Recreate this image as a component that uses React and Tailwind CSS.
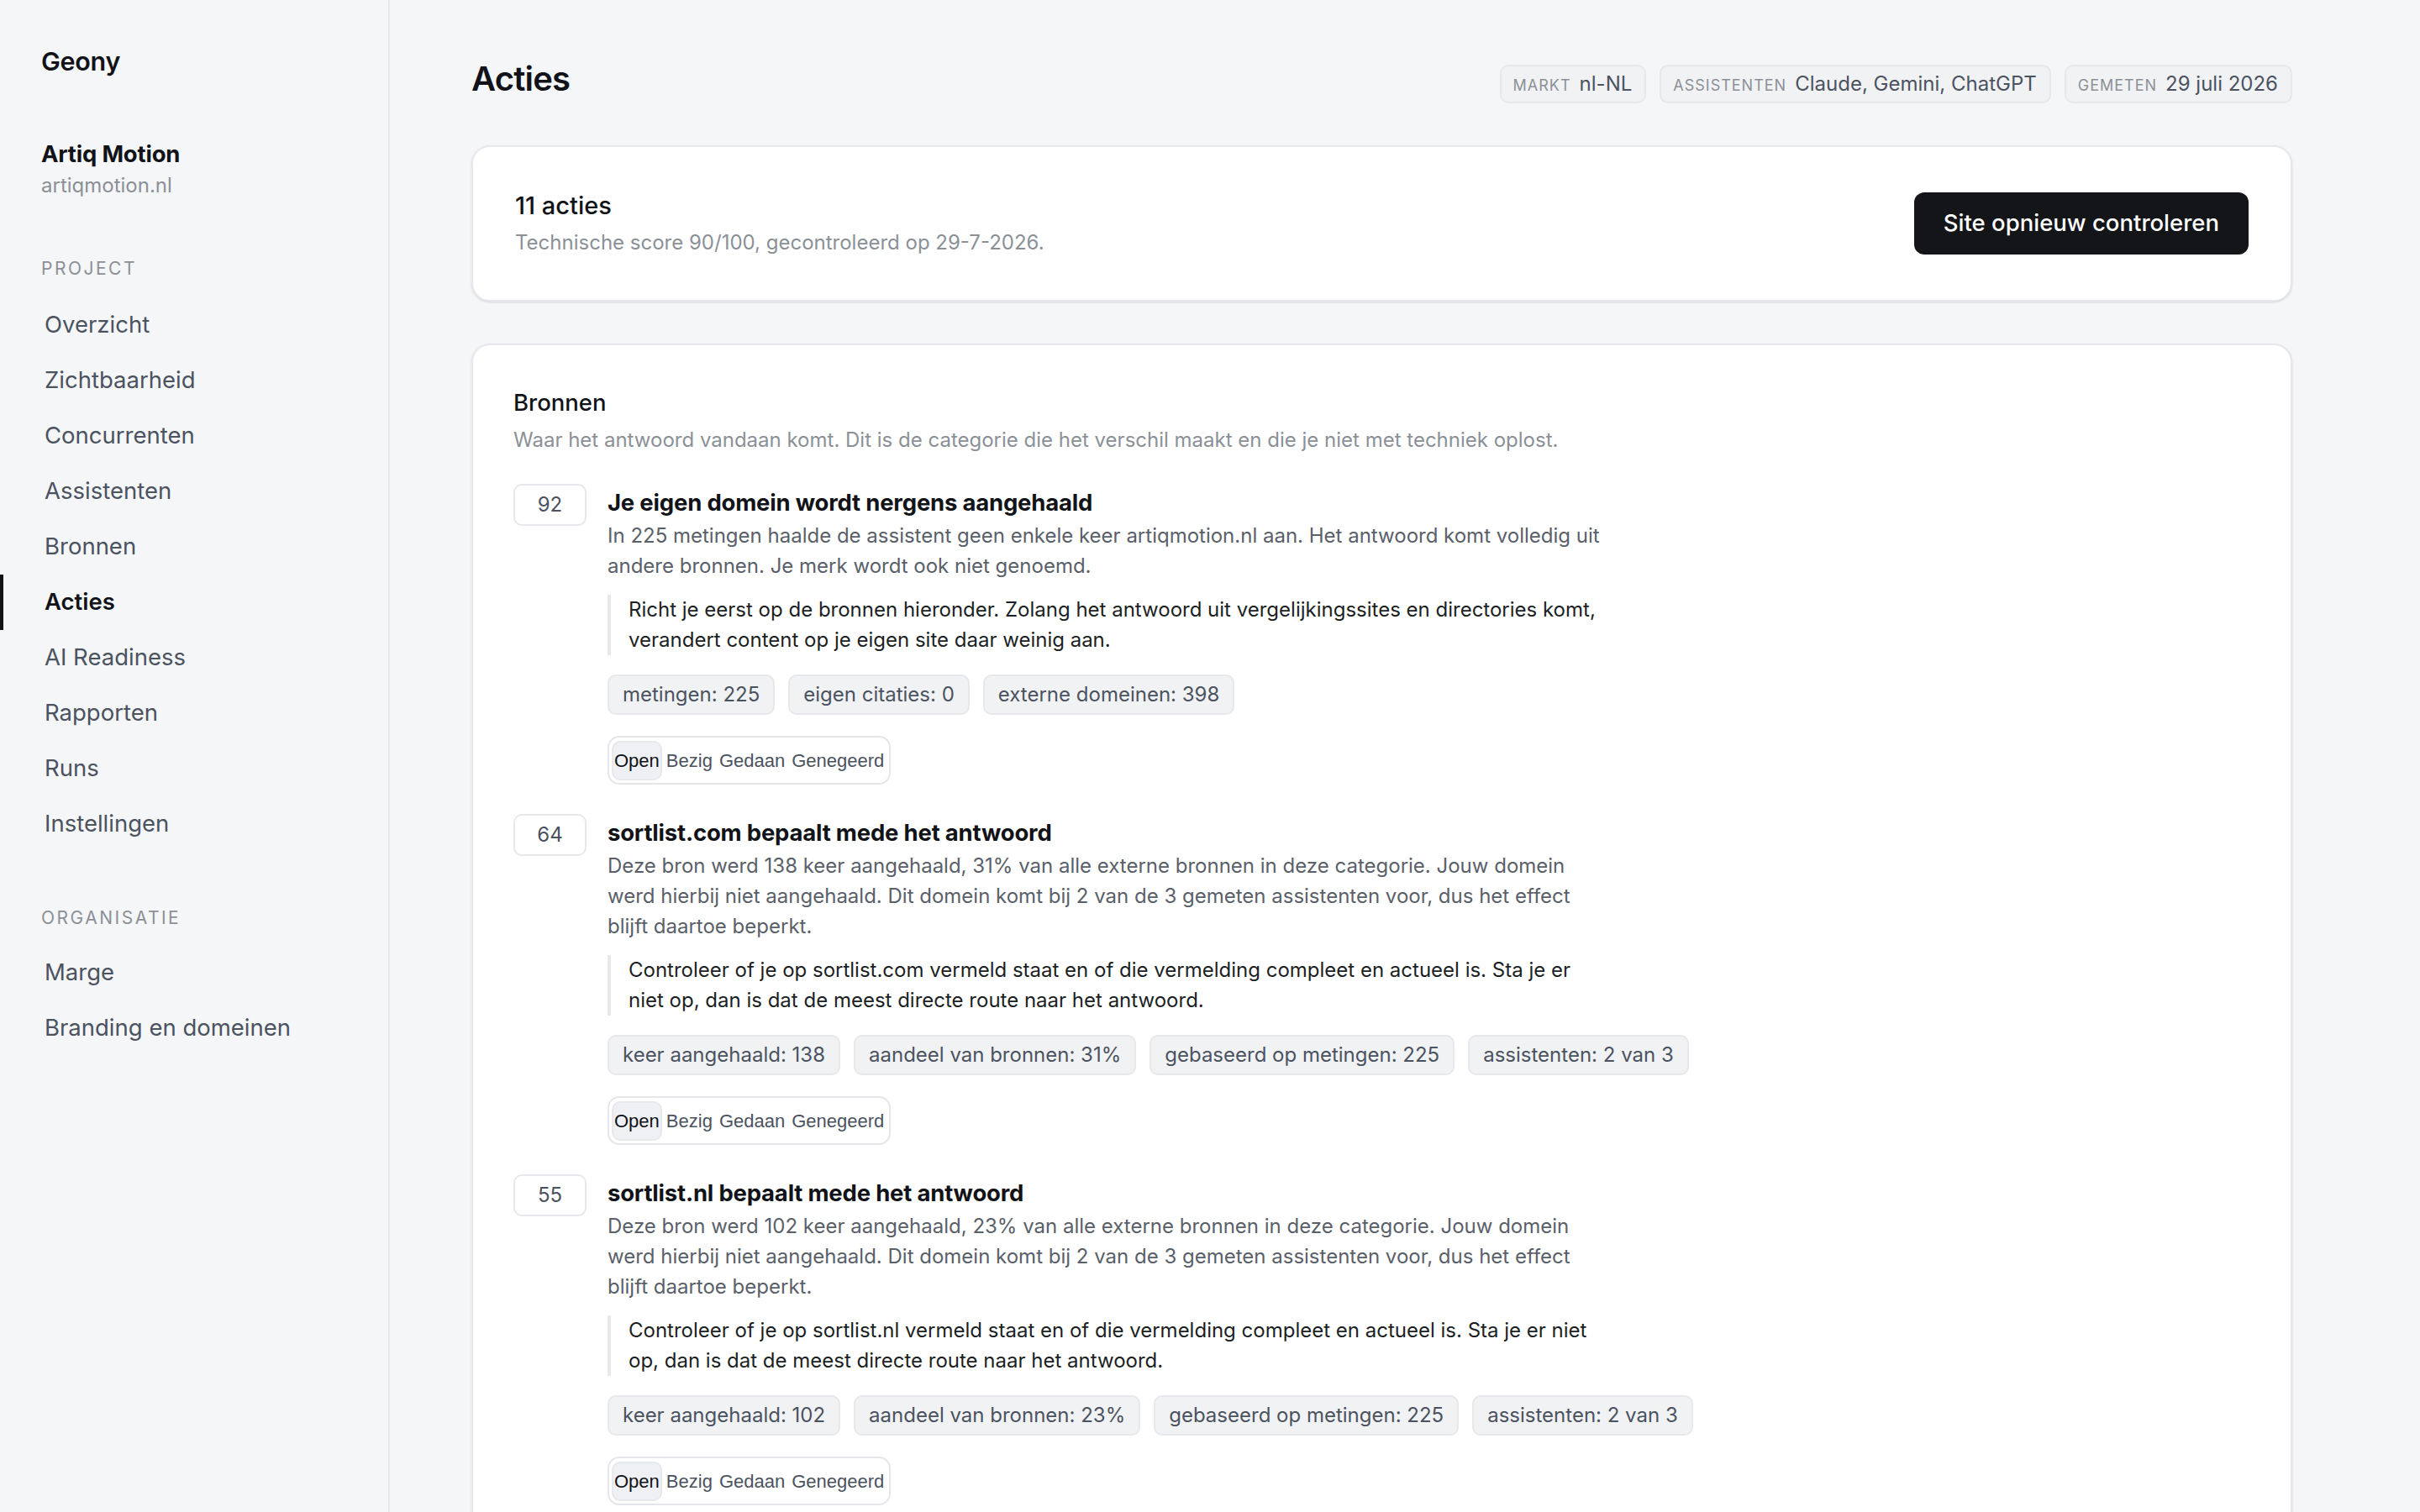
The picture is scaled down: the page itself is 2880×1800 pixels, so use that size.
import React, { useState } from "react";

const projectNav = [
  "Overzicht",
  "Zichtbaarheid",
  "Concurrenten",
  "Assistenten",
  "Bronnen",
  "Acties",
  "AI Readiness",
  "Rapporten",
  "Runs",
  "Instellingen",
];

const orgNav = ["Marge", "Branding en domeinen"];

const actions = [
  {
    score: 92,
    title: "Je eigen domein wordt nergens aangehaald",
    text: "In 225 metingen haalde de assistent geen enkele keer artiqmotion.nl aan. Het antwoord komt volledig uit andere bronnen. Je merk wordt ook niet genoemd.",
    advice:
      "Richt je eerst op de bronnen hieronder. Zolang het antwoord uit vergelijkingssites en directories komt, verandert content op je eigen site daar weinig aan.",
    stats: ["metingen: 225", "eigen citaties: 0", "externe domeinen: 398"],
  },
  {
    score: 64,
    title: "sortlist.com bepaalt mede het antwoord",
    text: "Deze bron werd 138 keer aangehaald, 31% van alle externe bronnen in deze categorie. Jouw domein werd hierbij niet aangehaald. Dit domein komt bij 2 van de 3 gemeten assistenten voor, dus het effect blijft daartoe beperkt.",
    advice:
      "Controleer of je op sortlist.com vermeld staat en of die vermelding compleet en actueel is. Sta je er niet op, dan is dat de meest directe route naar het antwoord.",
    stats: [
      "keer aangehaald: 138",
      "aandeel van bronnen: 31%",
      "gebaseerd op metingen: 225",
      "assistenten: 2 van 3",
    ],
  },
  {
    score: 55,
    title: "sortlist.nl bepaalt mede het antwoord",
    text: "Deze bron werd 102 keer aangehaald, 23% van alle externe bronnen in deze categorie. Jouw domein werd hierbij niet aangehaald. Dit domein komt bij 2 van de 3 gemeten assistenten voor, dus het effect blijft daartoe beperkt.",
    advice:
      "Controleer of je op sortlist.nl vermeld staat en of die vermelding compleet en actueel is. Sta je er niet op, dan is dat de meest directe route naar het antwoord.",
    stats: [
      "keer aangehaald: 102",
      "aandeel van bronnen: 23%",
      "gebaseerd op metingen: 225",
      "assistenten: 2 van 3",
    ],
  },
];

const statuses = ["Open", "Bezig", "Gedaan", "Genegeerd"];

function NavItem({ label, active }) {
  return (
    <a
      href="#"
      className={`flex h-[66px] items-center border-l-4 pl-[49px] text-[27.5px] ${
        active
          ? "border-[#111318] font-semibold text-[#111318]"
          : "border-transparent text-[#4b5260]"
      }`}
    >
      {label}
    </a>
  );
}

function Badge({ label, value }) {
  return (
    <span className="flex h-[46px] items-center rounded-[10px] border-2 border-[#e6e8eb] bg-[#f1f2f4] pl-[14px] pr-[15px]">
      <span className="flex items-baseline gap-[10px]">
        <span className="text-[18px] uppercase tracking-[1px] text-[#8b9097]">{label}</span>
        <span className="text-[24px] text-[#4b5260]">{value}</span>
      </span>
    </span>
  );
}

function StatusToggle() {
  const [status, setStatus] = useState("Open");
  return (
    <div className="mt-[25px] inline-flex h-[58px] items-center gap-[2px] rounded-[14px] border-2 border-[#e4e6ea] bg-white px-[3px]">
      {statuses.map((s) => (
        <button
          key={s}
          onClick={() => setStatus(s)}
          className={`h-[47px] rounded-[10px] border-2 px-[1px] font-['Liberation_Sans',Arial,sans-serif] text-[22px] ${
            status === s
              ? "border-[#e6e8eb] bg-[#eef0f3] text-[#111318]"
              : "border-transparent text-[#4b5260]"
          }`}
        >
          {s}
        </button>
      ))}
    </div>
  );
}

function ActionItem({ action, first }) {
  return (
    <div className={`flex gap-[25px] ${first ? "" : "mt-[35px]"}`}>
      <div className="flex h-[50px] w-[87px] shrink-0 items-center justify-center rounded-[10px] border-2 border-[#e6e8eb] bg-white text-[24px] text-[#4b5260]">
        {action.score}
      </div>
      <div className="min-w-0 flex-1">
        <h3 className="text-[27.5px] font-bold leading-[44px] tracking-[-0.2px] text-[#111318]">
          {action.title}
        </h3>
        <p className="max-w-[1190px] text-[24px] leading-[36px] text-[#5a6069]">{action.text}</p>
        <blockquote className="mt-[16px] max-w-[1190px] border-l-4 border-[#e6e8eb] pl-[21px] text-[24px] leading-[36px] text-[#1c1f24]">
          {action.advice}
        </blockquote>
        <div className="mt-[23px] flex flex-wrap gap-[16px]">
          {action.stats.map((s) => (
            <span
              key={s}
              className="flex h-[48px] items-center rounded-[10px] border-2 border-[#e6e8eb] bg-[#f1f2f4] px-[16px] text-[24px] text-[#4b5260]"
            >
              {s}
            </span>
          ))}
        </div>
        <StatusToggle />
      </div>
    </div>
  );
}

export default function App() {
  return (
    <div className="flex h-screen overflow-hidden bg-[#f5f6f8] font-['Inter','Noto_Sans',sans-serif] text-[#111318]">
      {/* Sidebar */}
      <aside className="w-[464px] shrink-0 border-r-2 border-[#e6e8eb] bg-[#f5f6f8] pt-[53px]">
        <div className="pl-[49px] text-[30.5px] font-semibold leading-[40px] tracking-[-0.3px]">Geony</div>

        <div className="mt-[72px] pl-[49px]">
          <div className="text-[27.5px] font-bold leading-[37px] tracking-[-0.2px]">Artiq Motion</div>
          <div className="text-[24px] leading-[37px] text-[#8b9097]">artiqmotion.nl</div>
        </div>

        <div className="mt-[66px] pl-[49px] text-[21px] uppercase leading-[30px] tracking-[2.5px] text-[#8b9097]">
          Project
        </div>
        <nav className="mt-[19px]">
          {projectNav.map((item) => (
            <NavItem key={item} label={item} active={item === "Acties"} />
          ))}
        </nav>

        <div className="mt-[64px] pl-[49px] text-[21px] uppercase leading-[30px] tracking-[2.5px] text-[#8b9097]">
          Organisatie
        </div>
        <nav className="mt-[17px]">
          {orgNav.map((item) => (
            <NavItem key={item} label={item} />
          ))}
        </nav>
      </aside>

      {/* Main */}
      <main className="flex-1 overflow-y-auto pl-[97px] pt-[70px]">
        <div className="max-w-[2167px]">
          <div className="flex items-start justify-between">
            <h1 className="text-[40px] font-semibold leading-[48px] tracking-[-0.8px]">Acties</h1>
            <div className="mt-[7px] flex gap-[16px]">
              <Badge label="Markt" value="nl-NL" />
              <Badge label="Assistenten" value="Claude, Gemini, ChatGPT" />
              <Badge label="Gemeten" value="29 juli 2026" />
            </div>
          </div>

          <section className="mt-[50px] flex items-center justify-between rounded-[22px] border-2 border-[#e6e8eb] bg-white px-[50px] py-[50px] shadow-sm">
            <div>
              <h2 className="text-[29px] font-medium leading-[40px]">11 acties</h2>
              <p className="mt-[6px] text-[24px] leading-[36px] text-[#8b9097]">
                Technische score 90/100, gecontroleerd op 29-7-2026.
              </p>
            </div>
            <button className="h-[74px] rounded-[12px] bg-[#131519] px-[35px] text-[27.5px] font-medium text-white">
              Site opnieuw controleren
            </button>
          </section>

          <section className="mt-[50px] rounded-[22px] border-2 border-[#e6e8eb] bg-white px-[48px] pb-[50px] pt-[48px] shadow-sm">
            <h2 className="text-[27.5px] font-medium leading-[40px]">Bronnen</h2>
            <p className="mt-[7px] text-[24px] leading-[36px] text-[#8b9097]">
              Waar het antwoord vandaan komt. Dit is de categorie die het verschil maakt en die je niet met techniek oplost.
            </p>
            <div className="mt-[34px]">
              {actions.map((a, i) => (
                <ActionItem key={a.score} action={a} first={i === 0} />
              ))}
            </div>
          </section>
        </div>
      </main>
    </div>
  );
}
